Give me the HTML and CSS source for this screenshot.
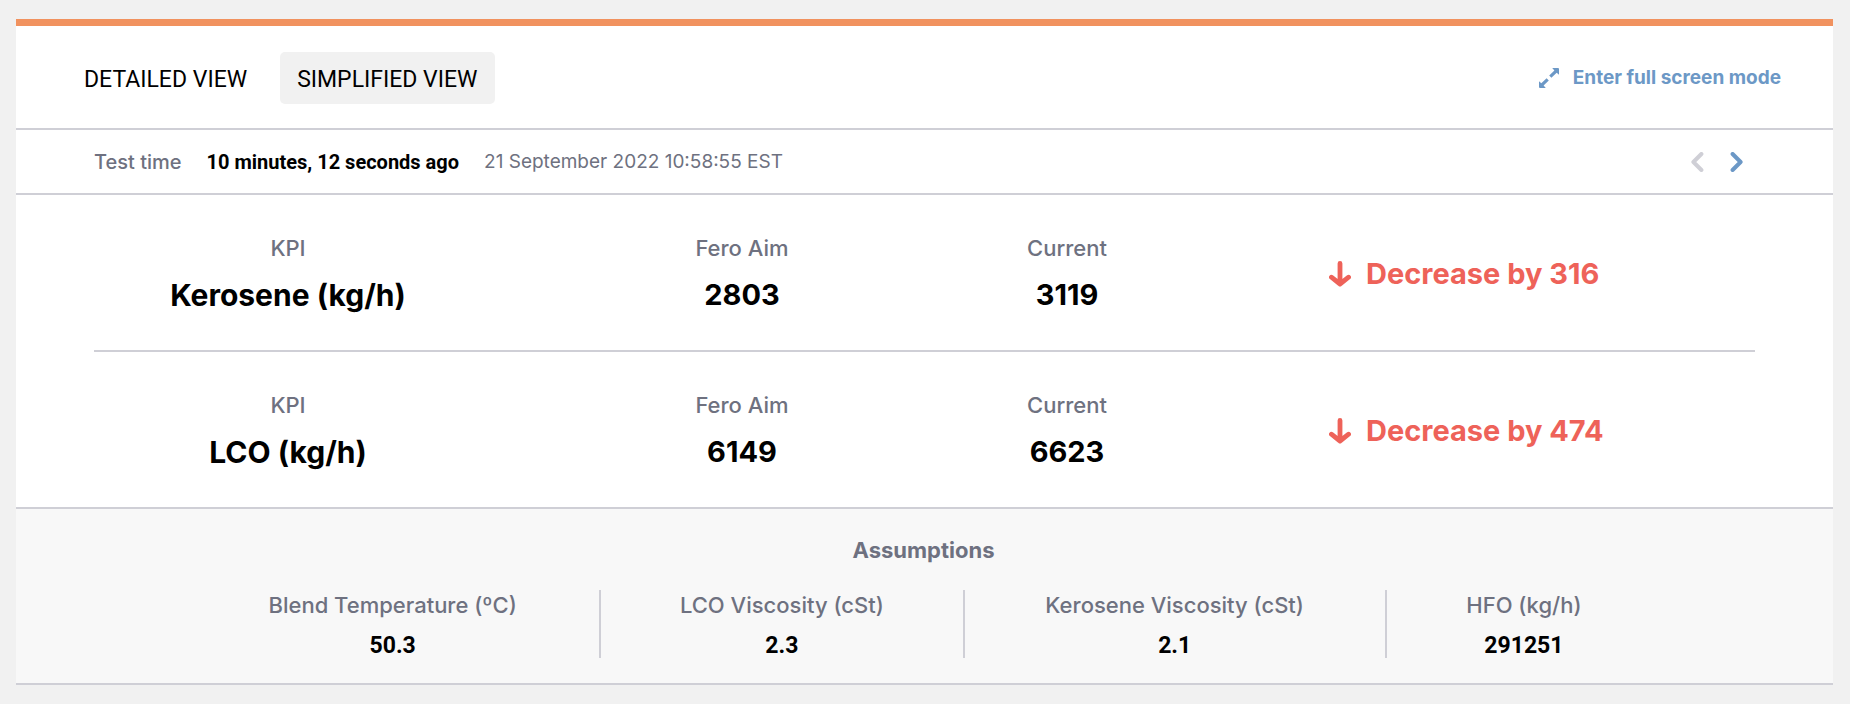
FILE: index.html
```html
<!DOCTYPE html>
<html lang="en">
<head>
<meta charset="utf-8">
<meta name="viewport" content="width=device-width, initial-scale=1">
<title>Test overview</title>
<link rel="stylesheet" href="styles.css">
</head>
<body>
<main class="card">
  <header class="toolbar">
    <div class="tabs">
      <button class="tab" type="button">DETAILED VIEW</button>
      <button class="tab tab-active" type="button" aria-pressed="true">SIMPLIFIED VIEW</button>
    </div>
    <button class="fullscreen" type="button">
      <svg width="20" height="20" viewBox="0 0 20 20" fill="currentColor" aria-hidden="true">
        <path d="M13.200 0H19a1 1 0 0 1 1 1v5.800l-2.300-2.100-5.300 5.100-2.200-2.200 5.200-5.200z"/>
        <path d="M6.800 20H1a1 1 0 0 1-1-1v-5.800l2.300 2.100 5.300-5.100 2.200 2.200-5.200 5.200z"/>
      </svg>
      <span>Enter full screen mode</span>
    </button>
  </header>

  <section class="timebar">
    <span class="time-label">Test time</span>
    <strong class="time-ago">10 minutes, 12 seconds ago</strong>
    <time class="time-date" datetime="2022-09-21T10:58:55-05:00">21 September 2022 10:58:55 EST</time>
    <nav class="pager">
      <button class="page-button" type="button" aria-label="Previous" disabled>
        <svg width="13" height="20" viewBox="0 0 13 20" fill="none" stroke="currentColor" stroke-width="4" stroke-linecap="round" stroke-linejoin="round" aria-hidden="true"><path d="M10.400 2L2.400 10l8 8"/></svg>
      </button>
      <button class="page-button" type="button" aria-label="Next">
        <svg width="13" height="20" viewBox="0 0 13 20" fill="none" stroke="currentColor" stroke-width="4" stroke-linecap="round" stroke-linejoin="round" aria-hidden="true"><path d="M2.600 2l8 8-8 8"/></svg>
      </button>
    </nav>
  </section>

  <section class="kpis">
    <div class="kpi">
      <div class="metric metric-name"><span class="label">KPI</span><strong class="figure">Kerosene (kg/h)</strong></div>
      <div class="metric"><span class="label">Fero Aim</span><strong class="figure">2803</strong></div>
      <div class="metric"><span class="label">Current</span><strong class="figure">3119</strong></div>
      <div class="advice">
        <svg width="22" height="26" viewBox="0 0 22 26" fill="none" stroke="currentColor" stroke-width="4.800" stroke-linecap="round" stroke-linejoin="round" aria-hidden="true"><path d="M11 2.400V23M2.400 16.200L11 23l8.600-6.800"/></svg>
        <span>Decrease by 316</span>
      </div>
    </div>
    <div class="kpi">
      <div class="metric metric-name"><span class="label">KPI</span><strong class="figure">LCO (kg/h)</strong></div>
      <div class="metric"><span class="label">Fero Aim</span><strong class="figure">6149</strong></div>
      <div class="metric"><span class="label">Current</span><strong class="figure">6623</strong></div>
      <div class="advice">
        <svg width="22" height="26" viewBox="0 0 22 26" fill="none" stroke="currentColor" stroke-width="4.800" stroke-linecap="round" stroke-linejoin="round" aria-hidden="true"><path d="M11 2.400V23M2.400 16.200L11 23l8.600-6.800"/></svg>
        <span>Decrease by 474</span>
      </div>
    </div>
  </section>

  <section class="assumptions">
    <h2 class="assumptions-title">Assumptions</h2>
    <dl class="assumption-list">
      <div class="assumption"><dt class="label">Blend Temperature (ºC)</dt><dd class="value">50.3</dd></div>
      <div class="assumption"><dt class="label">LCO Viscosity (cSt)</dt><dd class="value">2.3</dd></div>
      <div class="assumption"><dt class="label">Kerosene Viscosity (cSt)</dt><dd class="value">2.1</dd></div>
      <div class="assumption"><dt class="label">HFO (kg/h)</dt><dd class="value">291251</dd></div>
    </dl>
  </section>
</main>
</body>
</html>
```
FILE: styles.css
```css
* {
  box-sizing: border-box;
}

body {
  margin: 0;
  padding: 19px 17px 19px 16px;
  background: #f1f1f1;
  color: #000;
  font-family: Inter, "Liberation Sans", sans-serif;
}

button {
  margin: 0;
  padding: 0;
  border: 0;
  background: none;
  color: inherit;
  font: inherit;
  cursor: pointer;
}

svg {
  display: block;
  flex: none;
}

.card {
  background: #fff;
  border-top: 7px solid #f1925f;
  border-bottom: 2px solid #cfcfd6;
}

.toolbar {
  display: flex;
  align-items: center;
  justify-content: space-between;
  padding: 26px 52px 24px 51px;
  border-bottom: 2px solid #cfcfd6;
}

.tabs {
  display: flex;
  gap: 16px;
}

.tab {
  padding: 4px 17px 0;
  border-radius: 5px;
  font-family: Roboto, sans-serif;
  font-size: 23px;
  line-height: 48px;
}

.tab-active {
  background: #f1f1f1;
}

.fullscreen {
  display: flex;
  align-items: center;
  gap: 14px;
  color: #6c98c6;
  font-size: 19px;
  font-weight: 700;
  line-height: 24px;
}

.timebar {
  display: flex;
  align-items: center;
  gap: 25px;
  padding: 19px 90px 18px 78px;
  border-bottom: 2px solid #cfcfd6;
  color: #6e7180;
  font-size: 19px;
  line-height: 26px;
}

.time-label {
  font-size: 20px;
  font-weight: 500;
}

.time-ago {
  color: #000;
  font-family: Roboto, sans-serif;
  font-size: 20px;
  font-weight: 700;
}

.pager {
  display: flex;
  gap: 26px;
  margin-left: auto;
}

.page-button {
  color: #6c98c6;
}

.page-button:disabled {
  color: #cfcfd6;
}

.kpis {
  padding: 0 78px;
}

.kpi {
  display: grid;
  grid-template-columns: 486fr 324fr 326fr 525fr;
  align-items: center;
  padding: 37px 0 35px;
}

.kpi + .kpi {
  border-top: 2px solid #cfcfd6;
}

.metric {
  display: flex;
  flex-direction: column;
  align-items: center;
  gap: 11px;
}

.metric-name {
  padding-right: 98px;
}

.label {
  color: #6e7180;
  font-size: 22px;
  font-weight: 500;
  line-height: 32px;
  white-space: nowrap;
}

.figure {
  font-size: 29px;
  font-weight: 700;
  line-height: 40px;
  white-space: nowrap;
}

.metric-name .figure {
  font-size: 30px;
}

.advice {
  display: flex;
  align-items: center;
  gap: 15px;
  padding-left: 99px;
  color: #ee6259;
  font-size: 29px;
  font-weight: 700;
  line-height: 40px;
  white-space: nowrap;
}

.assumptions {
  padding: 25px 172px 25px 170px;
  border-top: 2px solid #cfcfd6;
  background: #f8f8f8;
}

.assumptions-title {
  margin: 0 0 24px;
  color: #6e7180;
  font-size: 22px;
  font-weight: 700;
  line-height: 32px;
  text-align: center;
}

.assumption-list {
  display: grid;
  grid-template-columns: 413fr 363fr 422fr 276fr;
  margin: 0;
}

.assumption {
  display: flex;
  flex-direction: column;
  align-items: center;
  gap: 14px;
}

.assumption + .assumption {
  border-left: 2px solid #cfcfd6;
}

.assumption .label {
  line-height: 30px;
}

.value {
  margin: 0;
  font-family: Roboto, sans-serif;
  font-size: 23px;
  font-weight: 700;
  line-height: 24px;
}
```
